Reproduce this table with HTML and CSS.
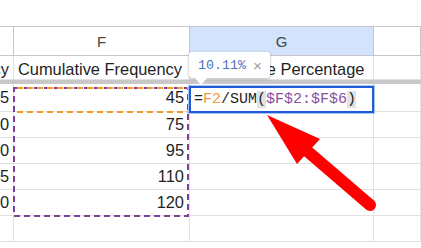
FILE: index.html
```html
<!DOCTYPE html>
<html lang="en">
<head>
  <meta charset="UTF-8">
  <title>Cumulative Percentage</title>
  <link rel="stylesheet" href="styles.css">
</head>
<body>
  <div class="sheet">
    <div class="top-space"></div>

    <div class="row col-heads">
      <div class="cell"></div>
      <div class="cell">F</div>
      <div class="cell selected">G</div>
      <div class="cell"></div>
    </div>

    <div class="row head-row">
      <div class="cell num">Frequency</div>
      <div class="cell">Cumulative Frequency</div>
      <div class="cell">Cumulative Percentage</div>
      <div class="cell"></div>
    </div>

    <div class="freeze"></div>

    <div class="row data-row first">
      <div class="cell num">45</div>
      <div class="cell num">45</div>
      <div class="cell"></div>
      <div class="cell"></div>
    </div>
    <div class="row data-row">
      <div class="cell num">30</div>
      <div class="cell num">75</div>
      <div class="cell"></div>
      <div class="cell"></div>
    </div>
    <div class="row data-row">
      <div class="cell num">20</div>
      <div class="cell num">95</div>
      <div class="cell"></div>
      <div class="cell"></div>
    </div>
    <div class="row data-row">
      <div class="cell num">15</div>
      <div class="cell num">110</div>
      <div class="cell"></div>
      <div class="cell"></div>
    </div>
    <div class="row data-row">
      <div class="cell num">10</div>
      <div class="cell num">120</div>
      <div class="cell"></div>
      <div class="cell"></div>
    </div>
    <div class="row data-row">
      <div class="cell"></div>
      <div class="cell"></div>
      <div class="cell"></div>
      <div class="cell"></div>
    </div>

    <!-- range marquees and the pointer arrow -->
    <svg class="marks" width="421" height="248" viewBox="0 0 421 248">
      <rect x="14" y="88" width="174" height="128" fill="none" stroke="#7e3f98" stroke-width="2" stroke-dasharray="6 4"/>
      <line x1="14" y1="88" x2="188" y2="88" stroke="#f39a2d" stroke-width="2" stroke-dasharray="6 4" stroke-dashoffset="-3"/>
      <line x1="14" y1="112" x2="188" y2="112" stroke="#f39a2d" stroke-width="2" stroke-dasharray="6 4" stroke-dashoffset="-3"/>
      <polygon points="267,115 320,139 297,164" fill="#ff0000"/>
      <line x1="306" y1="150" x2="370" y2="205" stroke="#ff0000" stroke-width="12" stroke-linecap="round"/>
    </svg>

    <div class="editor">
      <span class="ref-f">F2</span><span>/SUM</span><span class="paren">(</span><span class="ref-r">$F$2:$F$6</span><span class="paren">)</span>
    </div>

    <div class="tip">
      <span class="tip-val">10.11%</span>
      <span class="tip-close">×</span>
    </div>
  </div>
</body>
</html>
```

FILE: styles.css
```css
body {
  margin: 0;
  background-color: #ffffff;
  font-family: "Liberation Sans", Arial, sans-serif;
  color: #1f1f1f;
}
.sheet {
  position: relative;
  width: 421px;
  height: 248px;
  overflow: hidden;
}
.top-space {
  height: 26px;
  border-bottom: 1px solid #c7c7c7;
}
.row {
  display: grid;
  grid-template-columns: 14px 176px 184px 1fr;
}
.cell {
  box-sizing: border-box;
  border-right: 1px solid #e1e1e1;
  border-bottom: 1px solid #e1e1e1;
  display: flex;
  align-items: center;
  overflow: hidden;
  white-space: nowrap;
  font-size: 16.4px;
  padding: 0 4px;
}
.cell.num {
  justify-content: flex-end;
  padding: 0 5px 0 0;
}
.row > .cell:first-child {
  padding-right: 4px;
}
.col-heads .cell {
  height: 29px;
  justify-content: center;
  font-size: 15px;
  color: #444746;
  border-color: #c7c7c7;
  padding: 0;
}
.col-heads .cell.selected {
  background-color: #d3e3fd;
}
.head-row .cell {
  height: 24px;
  padding-top: 4px;
}
.freeze {
  height: 4px;
  background-color: #c8c8c8;
}
.data-row .cell {
  height: 26px;
}
.data-row.first .cell {
  height: 28px;
}
.marks {
  position: absolute;
  left: 0;
  top: 0;
}
.editor {
  position: absolute;
  left: 189px;
  top: 86px;
  width: 185px;
  height: 27px;
  box-sizing: border-box;
  border: 2px solid #1f5bd6;
  box-shadow: 0 0 0 1px #a9c5f5;
  background-color: #ffffff;
  display: flex;
  align-items: center;
  padding-left: 3px;
  font-family: "Liberation Mono", "DejaVu Sans Mono", monospace;
  font-size: 15px;
  color: #1f1f1f;
}
.editor::before {
  content: "=";
}
.ref-f {
  color: #f39a3c;
}
.ref-r {
  color: #8a4fa0;
}
.paren {
  background-color: #e3e3e3;
}
.tip {
  position: absolute;
  left: 189px;
  top: 52px;
  width: 81px;
  height: 26px;
  box-sizing: border-box;
  background-color: #ffffff;
  border-radius: 3px;
  box-shadow: 0 1px 3px rgba(0, 0, 0, 0.3);
  display: flex;
  align-items: center;
  gap: 7px;
  padding-left: 9px;
  font-family: "Liberation Mono", "DejaVu Sans Mono", monospace;
  font-size: 13.3px;
}
.tip::after {
  content: "";
  position: absolute;
  left: 5px;
  bottom: -7px;
  border-left: 7px solid transparent;
  border-right: 7px solid transparent;
  border-top: 8px solid #ffffff;
}
.tip-val {
  color: #4c72c4;
}
.tip-close {
  color: #a0a0a0;
  font-family: "Liberation Sans", Arial, sans-serif;
  font-size: 15px;
}
```
